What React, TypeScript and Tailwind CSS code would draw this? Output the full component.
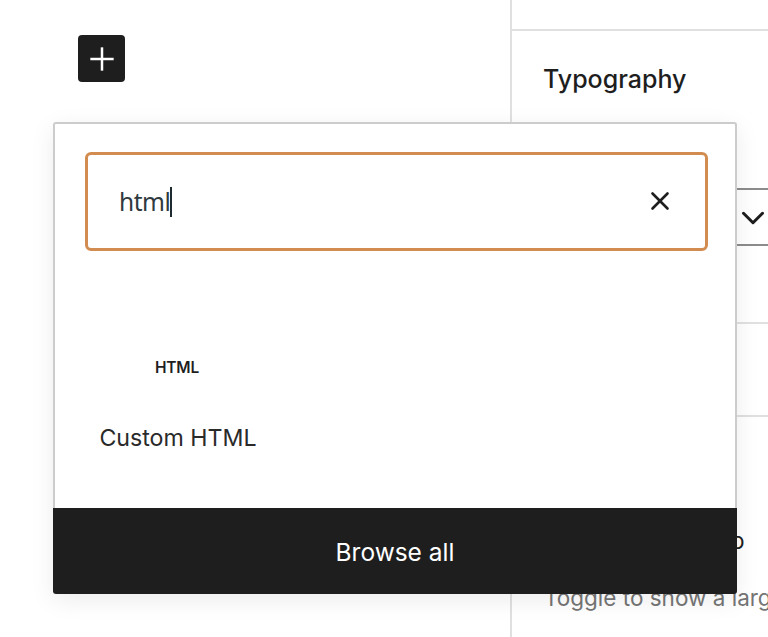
import { Plus, X, ChevronDown } from "lucide-react";

function Sidebar() {
    return (
        <aside className="flex-1 border-l-2 border-[#e0e0e0] overflow-hidden">
            <div className="h-[31px] border-b-2 border-[#e0e0e0]" />
            <div className="h-[293px] border-b-2 border-[#e0e0e0] pt-[32px]">
                <h2 className="ml-[31px] text-[25px] leading-[32px] font-medium text-[#1e1e1e]">Typography</h2>
                <div className="mt-[93px] h-[58px] ml-[32px] w-[400px] border-y-2 border-[#8c8c8c] flex items-center">
                    <ChevronDown className="ml-[190px] mt-[2px] h-[38px] w-[38px] text-[#1e1e1e]" strokeWidth={1.9} />
                </div>
            </div>
            <div className="h-[93px] border-b-2 border-[#e0e0e0]" />
            <div className="pl-[32px] pt-[109px] whitespace-nowrap">
                <p className="ml-[101px] text-[23px] leading-[30px] text-[#1e1e1e]">Drop cap</p>
                <p className="mt-[27px] text-[22.5px] leading-[30px] text-[#757575]">Toggle to show a large initial letter.</p>
            </div>
        </aside>
    );
}

function BlockPopover() {
    return (
        <div className="absolute left-[53px] top-[122px] w-[684px] rounded-[3px] shadow-[0_6px_24px_rgba(0,0,0,0.08)]">
            <div className="h-[386px] bg-white border-2 border-b-0 border-[#cccccc] rounded-t-[3px] pl-[30px] pr-[27px] pt-[28px]">
                <div className="h-[99px] rounded-[6px] border-[3px] border-[#d38c4f] flex items-center justify-between pl-[31px] pr-[30px]">
                    <div className="flex items-center font-['Noto_Sans',sans-serif] text-[24.5px] leading-[30px] tracking-[-0.5px] text-[#2f3a40]">
                        html
                        <span className="h-[30px] w-[2px] bg-[#1e2a30]" />
                    </div>
                    <X className="mb-[2px] h-[30px] w-[30px] text-[#1e1e1e]" strokeWidth={2.1} />
                </div>
                <div className="mt-[107px] ml-[-1px] w-[188px] flex flex-col items-center text-[#1e1e1e]">
                    <span className="mr-[2px] text-[15.5px] leading-[20px] font-semibold tracking-[-0.2px]">HTML</span>
                    <span className="mt-[45px] text-[23.2px] leading-[30px] whitespace-nowrap text-[#2a2a2a]">Custom HTML</span>
                </div>
            </div>
            <div className="h-[86px] bg-[#1e1e1e] rounded-b-[3px] pt-[1px] flex items-center justify-center text-white text-[24.5px] leading-[30px]">
                Browse all
            </div>
        </div>
    );
}

export default function App() {
    return (
        <div className="relative flex h-[637px] w-[768px] overflow-hidden bg-white font-['Inter',sans-serif]">
            <main className="w-[510px] pl-[78px] pt-[35px]">
                <button className="flex h-[47px] w-[47px] items-center justify-center rounded-[4px] bg-[#1e1e1e] text-white">
                    <Plus className="h-[40px] w-[40px]" strokeWidth={1.5} strokeLinecap="butt" />
                </button>
            </main>
            <Sidebar />
            <BlockPopover />
        </div>
    );
}
